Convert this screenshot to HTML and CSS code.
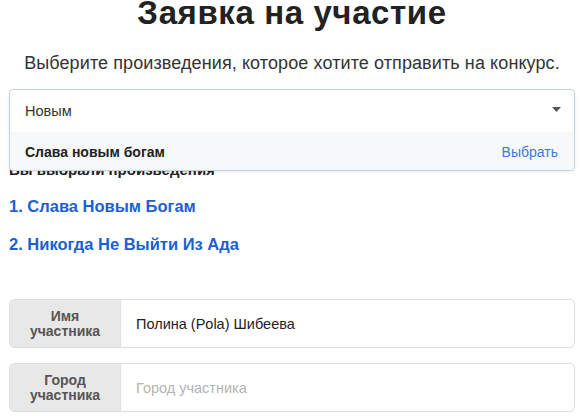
FILE: index.html
```
<!DOCTYPE html>
<html lang="ru">
<head>
<meta charset="utf-8">
<title>Заявка на участие</title>
<link rel="stylesheet" href="styles.css">
</head>
<body>
<div class="page">
  <h1 class="title">Заявка на участие</h1>
  <p class="subtitle">Выберите произведения, которое хотите отправить на конкурс.</p>

  <div class="combo">
    <div class="combo-box">
      <div class="control">
        <span class="control-value">Новым</span>
        <svg class="caret" width="9" height="5" viewBox="0 0 9 5"><path d="M0 0h9L4.5 5z" fill="#555"/></svg>
      </div>
      <div class="menu">
        <span class="option-name">Слава новым богам</span>
        <span class="option-action">Выбрать</span>
      </div>
    </div>
  </div>

  <h2 class="chosen-title">Вы выбрали произведения</h2>
  <ol class="chosen-list">
    <li class="chosen-item"><a class="chosen-link" href="#">1. Слава Новым Богам</a></li>
    <li class="chosen-item"><a class="chosen-link" href="#">2. Никогда Не Выйти Из Ада</a></li>
  </ol>

  <div class="fields">
    <div class="field">
      <div class="field-label">Имя<br>участника</div>
      <div class="field-input">Полина (Pola) Шибеева</div>
    </div>
    <div class="field">
      <div class="field-label">Город<br>участника</div>
      <div class="field-input placeholder">Город участника</div>
    </div>
  </div>
</div>
</body>
</html>
```

FILE: styles.css
```
* { box-sizing: border-box; }
html, body { margin: 0; padding: 0; background: #fff; }
body {
  font-family: "Liberation Sans", Arial, sans-serif;
  color: #222;
  overflow: hidden;
}
.page {
  padding: 0 10px 0 9px;
}
.title {
  margin: 0;
  font-size: 33px;
  line-height: 26px;
  letter-spacing: 0.6px;
  font-weight: 700;
  text-align: center;
  color: #222;
}
.subtitle {
  margin: 25px 0 14px;
  font-size: 18px;
  line-height: 24px;
  letter-spacing: 0.1px;
  text-align: center;
  color: #333;
}
.combo {
  position: relative;
  height: 43px;
}
.combo-box {
  position: absolute;
  top: 0;
  left: 0;
  right: 0;
  z-index: 2;
  border: 1px solid #c5d5df;
  border-radius: 4px;
  background: #fff;
  box-shadow: 0 1px 3px rgba(60, 90, 110, 0.12);
  overflow: hidden;
}
.control {
  height: 42px;
  display: flex;
  align-items: center;
  justify-content: space-between;
  padding: 0 13px 0 15px;
  font-size: 14.5px;
  color: #333;
}
.caret { margin-top: -3px; }
.menu {
  height: 38px;
  display: flex;
  align-items: center;
  justify-content: space-between;
  padding: 2px 16px 0 15px;
  background: #f7f8f9;
  font-size: 14px;
}
.option-name { font-weight: 700; color: #222; }
.option-action { color: #3d7ad3; }

.chosen-title {
  margin: 26px 0 0;
  font-size: 15px;
  line-height: 24px;
  font-weight: 700;
  color: #222;
}
.chosen-list {
  list-style: none;
  margin: 12px 0 0;
  padding: 0;
  display: flex;
  flex-direction: column;
  gap: 14px;
}
.chosen-item {
  font-size: 16.5px;
  line-height: 24px;
  font-weight: 700;
}
.chosen-link {
  color: #1b5fd4;
  text-decoration: none;
}
.fields {
  margin-top: 43px;
  display: flex;
  flex-direction: column;
  gap: 15px;
}
.field {
  display: flex;
  height: 49px;
  border: 1px solid #dedede;
  border-radius: 5px;
  overflow: hidden;
}
.field-label {
  width: 111px;
  flex: none;
  background: #e8e8e8;
  display: flex;
  align-items: center;
  justify-content: center;
  text-align: center;
  font-size: 14px;
  line-height: 15px;
  font-weight: 700;
  color: #555;
  border-right: 1px solid #e0e0e0;
}
.field-input {
  flex: 1;
  display: flex;
  align-items: center;
  padding-left: 15px;
  font-size: 14.5px;
  color: #222;
}
.field-input.placeholder { color: #b4b4b4; }
```
